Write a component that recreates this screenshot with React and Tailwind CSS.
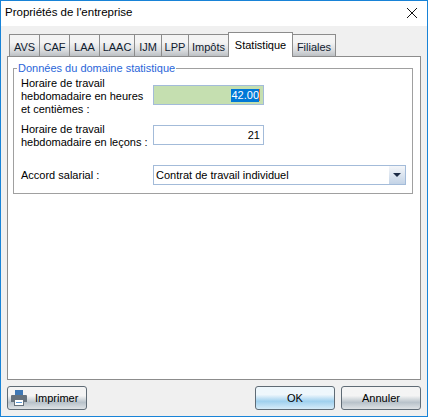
const tabs = [
  { label: "AVS", w: "w-[31px]" },
  { label: "CAF", w: "w-[31px]" },
  { label: "LAA", w: "w-[31px]" },
  { label: "LAAC", w: "w-[36px]" },
  { label: "IJM", w: "w-[28px]" },
  { label: "LPP", w: "w-[28px]" },
  { label: "Impôts", w: "w-[41px]" },
]

function Tab({ label, w }) {
  return (
    <div className={`${w} h-[22px] -mr-px pt-[3px] flex items-center justify-center border border-b-0 border-[#8c8c8c] bg-gradient-to-b from-[#f4f4f4] from-35% via-[#dcdee0] via-70% to-[#bcc0c4] text-[#10202f]`}>
      {label}
    </div>
  )
}

function PrinterIcon() {
  return (
    <svg width="18" height="16" viewBox="0 0 18 16">
      <rect x="5" y="0" width="8" height="5" fill="#3f78b5" />
      <path d="M1 6a1 1 0 0 1 1-1h14a1 1 0 0 1 1 1v6H1z" fill="#66727d" />
      <rect x="4.5" y="9.5" width="9" height="6" fill="#fff" stroke="#66727d" />
      <rect x="6" y="12" width="6" height="1" fill="#5c9ad6" />
    </svg>
  )
}

export default function App() {
  return (
    <div className="w-[428px] h-[417px] flex flex-col bg-[#f0f0f0] border border-[#1883d7] text-[11px] leading-[13px] text-black font-['Liberation_Sans',sans-serif] overflow-hidden">
      <div className="h-[25px] shrink-0 bg-white flex items-center justify-between pl-[4px] pr-[10px] pb-[2px]">
        <span className="text-[11.5px]">Propriétés de l'entreprise</span>
        <svg width="10" height="10" viewBox="0 0 10 10" stroke="#111" strokeWidth="1">
          <path d="M0 0l10 10M10 0L0 10" />
        </svg>
      </div>

      <div className="flex-1 flex flex-col px-[6px] pt-[6px]">
        <div className="h-[24px] shrink-0 flex items-end pl-[2px] relative z-10">
          {tabs.map((t) => <Tab key={t.label} {...t} />)}
          <div className="w-[65px] h-[25px] -mr-px -mb-px flex items-center justify-center border border-b-0 border-[#8c8c8c] bg-white">
            Statistique
          </div>
          <Tab label="Filiales" w="w-[44px]" />
        </div>

        <div className="h-[324px] shrink-0 bg-white border border-[#8c8c8c] pt-[11px] pl-[5px] pr-[7px]">
          <div className="relative h-[126px] border border-[#a0a0a0] pt-[8px] pl-[7px] pr-[6px]">
            <span className="absolute -top-[7px] left-[3px] bg-white px-px text-[#2a66d9] whitespace-nowrap">Données du domaine statistique</span>

            <div className="flex items-start h-[46px]">
              <div className="w-[132px] shrink-0 whitespace-nowrap">Horaire de travail<br />hebdomadaire en heures<br />et centièmes :</div>
              <div className="w-[111px] h-[20px] mt-[8px] border border-[#a3bbd9] bg-[#c5dfb0] flex items-center justify-end pr-[3px]">
                <span className="bg-[#0078d7] text-white">42.00</span>
                <span className="w-px h-[12px] bg-[#e8742c]" />
              </div>
            </div>

            <div className="flex items-start h-[42px]">
              <div className="w-[132px] shrink-0 whitespace-nowrap">Horaire de travail<br />hebdomadaire en leçons :</div>
              <div className="w-[111px] h-[20px] mt-[2px] border border-[#a3bbd9] bg-white flex items-center justify-end pr-[3px]">21</div>
            </div>

            <div className="flex items-center">
              <div className="w-[132px] shrink-0">Accord salarial :</div>
              <div className="w-[253px] h-[20px] border border-[#a3bbd9] bg-white flex items-center pl-[2px]">
                <span className="flex-1">Contrat de travail individuel</span>
                <div className="w-[16px] h-[18px] bg-gradient-to-b from-[#f4f6f9] to-[#c3d3e6] flex items-center justify-center">
                  <div className="w-0 h-0 border-x-[4px] border-x-transparent border-t-[4px] border-t-[#1b2b45]" />
                </div>
              </div>
            </div>
          </div>
        </div>

        <div className="flex items-center pt-[6px]">
          <button className="w-[80px] h-[24px] rounded-[3px] border border-[#5f6b75] bg-gradient-to-b from-[#f4f4f4] from-40% via-[#b8c2ca] via-70% to-[#dfe3e6] flex items-center pl-[2px]">
            <PrinterIcon />
            <span className="ml-[7px]">Imprimer</span>
          </button>
          <button className="ml-auto w-[80px] h-[24px] rounded-[3px] border border-[#5f6b75] bg-gradient-to-b from-[#eef7fc] from-35% via-[#9fd0ee] via-65% to-[#d6ecf9]">OK</button>
          <button className="ml-[6px] w-[80px] h-[24px] rounded-[3px] border border-[#5f6b75] bg-gradient-to-b from-[#f4f4f4] from-40% via-[#b8c2ca] via-70% to-[#dfe3e6]">Annuler</button>
        </div>
      </div>
    </div>
  )
}
